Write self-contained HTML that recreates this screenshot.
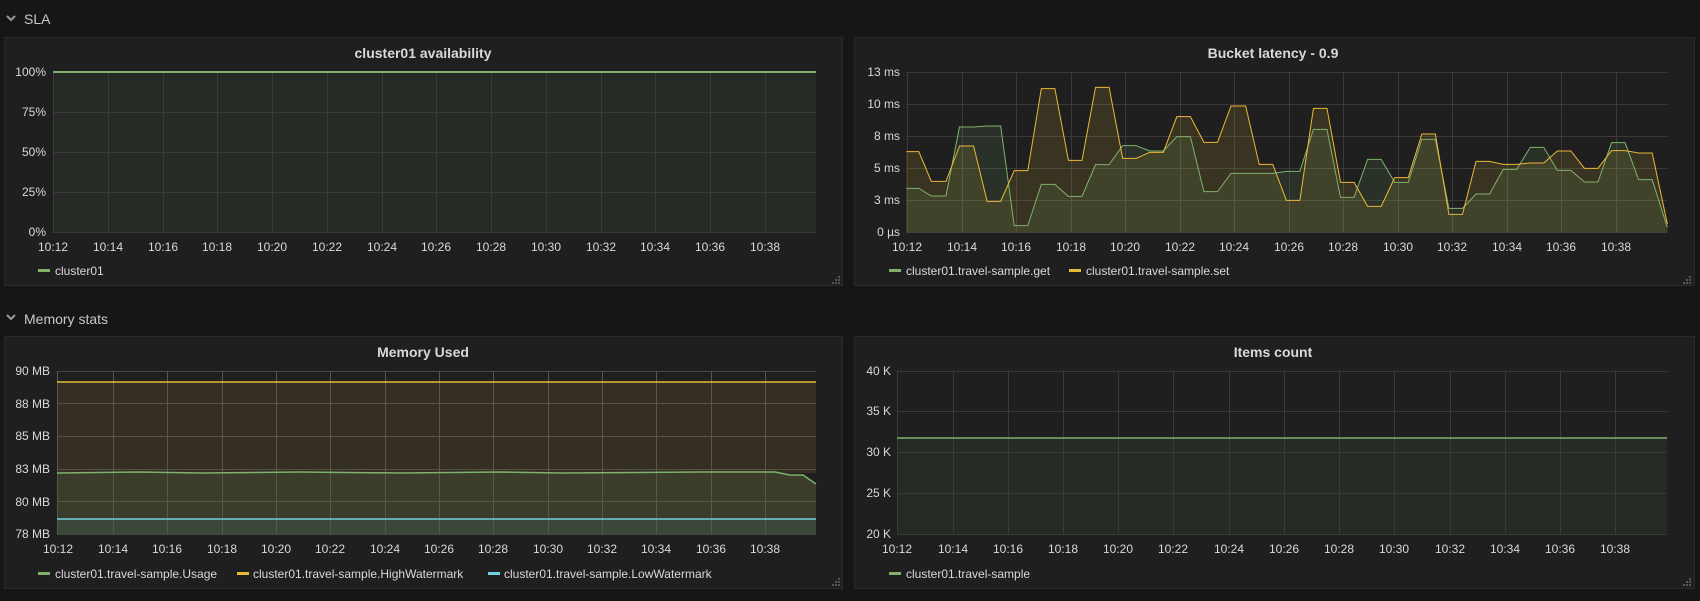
<!DOCTYPE html>
<html><head><meta charset="utf-8"><style>
html,body{margin:0;padding:0;background:#161616;width:1700px;height:601px;overflow:hidden}
svg{display:block}
text{font-family:"Liberation Sans",sans-serif;fill:#d8d9da}
.ax{font-size:12px}
.tt{font-size:14px;font-weight:bold;text-anchor:middle}
.hd{font-size:14px;fill:#c8c8c8}
.lg{font-size:12px}
.g{stroke:#3a3a3a;stroke-width:1}
</style></head><body>
<svg width="1700" height="601" viewBox="0 0 1700 601">
<!-- headers -->
<path d="M7 16 l4 4 l4 -4" stroke="#9a9a9a" stroke-width="2" fill="none"/>
<text class="hd" x="24" y="24">SLA</text>
<path d="M7 315 l4 4 l4 -4" stroke="#9a9a9a" stroke-width="2" fill="none"/>
<text class="hd" x="24" y="324">Memory stats</text>

<!-- panels -->
<rect x="4.5" y="37.5" width="838" height="248" fill="#1f1f20" stroke="#2a2a2b"/>
<rect x="854.5" y="37.5" width="840" height="248" fill="#1f1f20" stroke="#2a2a2b"/>
<rect x="4.5" y="336.5" width="838" height="252" fill="#1f1f20" stroke="#2a2a2b"/>
<rect x="854.5" y="336.5" width="840" height="252" fill="#1f1f20" stroke="#2a2a2b"/>

<text class="tt" x="423" y="58">cluster01 availability</text>
<text class="tt" x="1273" y="58">Bucket latency - 0.9</text>
<text class="tt" x="423" y="357">Memory Used</text>
<text class="tt" x="1273" y="357">Items count</text>

<!-- Panel 1 -->
<rect x="53" y="72" width="763" height="160" fill="#262a24"/>
<g class="g">
<line x1="53" y1="72.5" x2="816" y2="72.5"/><line x1="53" y1="112.5" x2="816" y2="112.5"/><line x1="53" y1="152.5" x2="816" y2="152.5"/><line x1="53" y1="192.5" x2="816" y2="192.5"/><line x1="53" y1="232.5" x2="816" y2="232.5"/>
</g>
<g class="g" id="vx1">
<line x1="53.5" y1="72" x2="53.5" y2="232"/><line x1="108.5" y1="72" x2="108.5" y2="232"/><line x1="163.5" y1="72" x2="163.5" y2="232"/><line x1="217.5" y1="72" x2="217.5" y2="232"/><line x1="272.5" y1="72" x2="272.5" y2="232"/><line x1="327.5" y1="72" x2="327.5" y2="232"/><line x1="382.5" y1="72" x2="382.5" y2="232"/><line x1="436.5" y1="72" x2="436.5" y2="232"/><line x1="491.5" y1="72" x2="491.5" y2="232"/><line x1="546.5" y1="72" x2="546.5" y2="232"/><line x1="601.5" y1="72" x2="601.5" y2="232"/><line x1="655.5" y1="72" x2="655.5" y2="232"/><line x1="710.5" y1="72" x2="710.5" y2="232"/><line x1="765.5" y1="72" x2="765.5" y2="232"/>
</g>
<line x1="53" y1="72" x2="816" y2="72" stroke="#7eb26d" stroke-width="2"/>
<g class="ax" text-anchor="end">
<text x="46" y="76">100%</text><text x="46" y="116">75%</text><text x="46" y="156">50%</text><text x="46" y="196">25%</text><text x="46" y="236">0%</text>
</g>
<g class="ax" text-anchor="middle">
<text x="53" y="251">10:12</text><text x="108" y="251">10:14</text><text x="163" y="251">10:16</text><text x="217" y="251">10:18</text><text x="272" y="251">10:20</text><text x="327" y="251">10:22</text><text x="382" y="251">10:24</text><text x="436" y="251">10:26</text><text x="491" y="251">10:28</text><text x="546" y="251">10:30</text><text x="601" y="251">10:32</text><text x="655" y="251">10:34</text><text x="710" y="251">10:36</text><text x="765" y="251">10:38</text>
</g>
<rect x="38" y="269" width="12" height="3" fill="#7eb26d"/>
<text class="lg" x="55" y="275">cluster01</text>

<!-- Panel 2 -->
<g class="g">
<line x1="906" y1="72.5" x2="1667" y2="72.5"/><line x1="906" y1="104.5" x2="1667" y2="104.5"/><line x1="906" y1="136.5" x2="1667" y2="136.5"/><line x1="906" y1="168.5" x2="1667" y2="168.5"/><line x1="906" y1="200.5" x2="1667" y2="200.5"/><line x1="906" y1="232.5" x2="1667" y2="232.5"/>
</g>
<g class="g">
<line x1="907.5" y1="72" x2="907.5" y2="232"/><line x1="962.5" y1="72" x2="962.5" y2="232"/><line x1="1016.5" y1="72" x2="1016.5" y2="232"/><line x1="1071.5" y1="72" x2="1071.5" y2="232"/><line x1="1125.5" y1="72" x2="1125.5" y2="232"/><line x1="1180.5" y1="72" x2="1180.5" y2="232"/><line x1="1234.5" y1="72" x2="1234.5" y2="232"/><line x1="1289.5" y1="72" x2="1289.5" y2="232"/><line x1="1343.5" y1="72" x2="1343.5" y2="232"/><line x1="1398.5" y1="72" x2="1398.5" y2="232"/><line x1="1452.5" y1="72" x2="1452.5" y2="232"/><line x1="1507.5" y1="72" x2="1507.5" y2="232"/><line x1="1561.5" y1="72" x2="1561.5" y2="232"/><line x1="1616.5" y1="72" x2="1616.5" y2="232"/>
</g>
<g transform="translate(850,0) scale(0.54201,0.33333)">
<path fill="rgba(234,184,57,0.13)" d="M104 697 L104,455 127,455 150,544 177,544 202,438 228,438 253,604 278,604 303,512 328,512 353,266 378,266 403,481 428,481 453,262 478,262 503,475 528,475 553,457 578,457 603,350 628,350 653,427 678,427 703,318 730,318 755,493 780,493 805,601 830,601 855,325 880,325 905,547 930,547 955,619 980,619 1005,533 1030,533 1055,402 1080,402 1105,643 1130,643 1155,484 1180,484 1205,493 1230,493 1255,489 1280,489 1305,453 1330,453 1355,505 1380,505 1405,452 1430,452 1455,459 1480,459 1508,672 L1508 697 Z"/>
<path fill="rgba(126,178,109,0.12)" d="M104 697 L104,565 127,565 150,588 177,588 202,381 228,381 253,378 278,378 303,677 328,677 353,553 378,553 403,589 428,589 453,494 478,494 503,437 528,437 553,453 578,453 603,410 628,410 653,575 678,575 703,520 730,520 755,520 780,520 805,514 830,514 855,388 880,388 905,592 930,592 955,478 980,478 1005,547 1030,547 1055,418 1080,418 1105,625 1130,625 1155,582 1180,582 1205,508 1230,508 1255,442 1280,442 1305,511 1330,511 1355,546 1380,546 1405,428 1430,428 1455,539 1480,539 1508,682 L1508 697 Z"/>
<path fill="none" stroke="#7eb26d" stroke-width="1" vector-effect="non-scaling-stroke" d="M104,565 127,565 150,588 177,588 202,381 228,381 253,378 278,378 303,677 328,677 353,553 378,553 403,589 428,589 453,494 478,494 503,437 528,437 553,453 578,453 603,410 628,410 653,575 678,575 703,520 730,520 755,520 780,520 805,514 830,514 855,388 880,388 905,592 930,592 955,478 980,478 1005,547 1030,547 1055,418 1080,418 1105,625 1130,625 1155,582 1180,582 1205,508 1230,508 1255,442 1280,442 1305,511 1330,511 1355,546 1380,546 1405,428 1430,428 1455,539 1480,539 1508,682"/>
<path fill="none" stroke="#eab839" stroke-width="1" vector-effect="non-scaling-stroke" d="M104,455 127,455 150,544 177,544 202,438 228,438 253,604 278,604 303,512 328,512 353,266 378,266 403,481 428,481 453,262 478,262 503,475 528,475 553,457 578,457 603,350 628,350 653,427 678,427 703,318 730,318 755,493 780,493 805,601 830,601 855,325 880,325 905,547 930,547 955,619 980,619 1005,533 1030,533 1055,402 1080,402 1105,643 1130,643 1155,484 1180,484 1205,493 1230,493 1255,489 1280,489 1305,453 1330,453 1355,505 1380,505 1405,452 1430,452 1455,459 1480,459 1508,672"/>
</g>
<g class="ax" text-anchor="end">
<text x="900" y="76">13 ms</text><text x="900" y="108">10 ms</text><text x="900" y="140">8 ms</text><text x="900" y="172">5 ms</text><text x="900" y="204">3 ms</text><text x="900" y="236">0 µs</text>
</g>
<g class="ax" text-anchor="middle">
<text x="907" y="251">10:12</text><text x="962" y="251">10:14</text><text x="1016" y="251">10:16</text><text x="1071" y="251">10:18</text><text x="1125" y="251">10:20</text><text x="1180" y="251">10:22</text><text x="1234" y="251">10:24</text><text x="1289" y="251">10:26</text><text x="1343" y="251">10:28</text><text x="1398" y="251">10:30</text><text x="1452" y="251">10:32</text><text x="1507" y="251">10:34</text><text x="1561" y="251">10:36</text><text x="1616" y="251">10:38</text>
</g>
<rect x="889" y="269" width="12" height="3" fill="#7eb26d"/>
<text class="lg" x="906" y="275">cluster01.travel-sample.get</text>
<rect x="1069" y="269" width="12" height="3" fill="#eab839"/>
<text class="lg" x="1086" y="275">cluster01.travel-sample.set</text>

<!-- Panel 3 memory -->
<rect x="57" y="382" width="759" height="91" fill="#352e22"/>
<path d="M57 473 L140 472 L200 473 L300 472 L400 473 L500 472 L560 473 L700 472 L775 472 L790 475 L803 475 L816 484 L816 519 L57 519 Z" fill="#3c3c2b"/>
<rect x="57" y="519" width="759" height="15" fill="#3b4738"/>
<g class="g" stroke-opacity="0.9">
<line x1="57" y1="371.5" x2="816" y2="371.5" stroke="#4a4a4a"/><line x1="57" y1="403.5" x2="816" y2="403.5" stroke="#5a5448"/><line x1="57" y1="436.5" x2="816" y2="436.5" stroke="#5a5448"/><line x1="57" y1="469.5" x2="816" y2="469.5" stroke="#5a5448"/><line x1="57" y1="501.5" x2="816" y2="501.5" stroke="#5a5a48"/><line x1="57" y1="534.5" x2="816" y2="534.5" stroke="#4a4a4a"/>
</g>
<g stroke="#57574a" stroke-width="1">
<line x1="57.5" y1="371" x2="57.5" y2="534"/><line x1="113.5" y1="371" x2="113.5" y2="534"/><line x1="167.5" y1="371" x2="167.5" y2="534"/><line x1="222.5" y1="371" x2="222.5" y2="534"/><line x1="276.5" y1="371" x2="276.5" y2="534"/><line x1="330.5" y1="371" x2="330.5" y2="534"/><line x1="385.5" y1="371" x2="385.5" y2="534"/><line x1="439.5" y1="371" x2="439.5" y2="534"/><line x1="493.5" y1="371" x2="493.5" y2="534"/><line x1="548.5" y1="371" x2="548.5" y2="534"/><line x1="602.5" y1="371" x2="602.5" y2="534"/><line x1="656.5" y1="371" x2="656.5" y2="534"/><line x1="711.5" y1="371" x2="711.5" y2="534"/><line x1="765.5" y1="371" x2="765.5" y2="534"/>
</g>
<line x1="57" y1="382" x2="816" y2="382" stroke="#eab839" stroke-width="1.5"/>
<path d="M57 473 L140 472 L200 473 L300 472 L400 473 L500 472 L560 473 L700 472 L775 472 L790 475 L803 475 L816 484" fill="none" stroke="#7eb26d" stroke-width="1.5"/>
<line x1="57" y1="519" x2="816" y2="519" stroke="#6ed0e0" stroke-width="1.5"/>
<g class="ax" text-anchor="end">
<text x="50" y="375">90 MB</text><text x="50" y="408">88 MB</text><text x="50" y="440">85 MB</text><text x="50" y="473">83 MB</text><text x="50" y="506">80 MB</text><text x="50" y="538">78 MB</text>
</g>
<g class="ax" text-anchor="middle">
<text x="58" y="553">10:12</text><text x="113" y="553">10:14</text><text x="167" y="553">10:16</text><text x="222" y="553">10:18</text><text x="276" y="553">10:20</text><text x="330" y="553">10:22</text><text x="385" y="553">10:24</text><text x="439" y="553">10:26</text><text x="493" y="553">10:28</text><text x="548" y="553">10:30</text><text x="602" y="553">10:32</text><text x="656" y="553">10:34</text><text x="711" y="553">10:36</text><text x="765" y="553">10:38</text>
</g>
<rect x="38" y="572" width="12" height="3" fill="#7eb26d"/>
<text class="lg" x="55" y="578">cluster01.travel-sample.Usage</text>
<rect x="237" y="572" width="12" height="3" fill="#eab839"/>
<text class="lg" x="253" y="578">cluster01.travel-sample.HighWatermark</text>
<rect x="488" y="572" width="12" height="3" fill="#6ed0e0"/>
<text class="lg" x="504" y="578">cluster01.travel-sample.LowWatermark</text>

<!-- Panel 4 items -->
<rect x="897" y="438" width="770" height="96" fill="#262a24"/>
<g class="g">
<line x1="897" y1="371.5" x2="1667" y2="371.5"/><line x1="897" y1="411.5" x2="1667" y2="411.5"/><line x1="897" y1="452.5" x2="1667" y2="452.5"/><line x1="897" y1="493.5" x2="1667" y2="493.5"/><line x1="897" y1="534.5" x2="1667" y2="534.5"/>
</g>
<g class="g">
<line x1="897.5" y1="371" x2="897.5" y2="534"/><line x1="953.5" y1="371" x2="953.5" y2="534"/><line x1="1008.5" y1="371" x2="1008.5" y2="534"/><line x1="1063.5" y1="371" x2="1063.5" y2="534"/><line x1="1118.5" y1="371" x2="1118.5" y2="534"/><line x1="1173.5" y1="371" x2="1173.5" y2="534"/><line x1="1229.5" y1="371" x2="1229.5" y2="534"/><line x1="1284.5" y1="371" x2="1284.5" y2="534"/><line x1="1339.5" y1="371" x2="1339.5" y2="534"/><line x1="1394.5" y1="371" x2="1394.5" y2="534"/><line x1="1450.5" y1="371" x2="1450.5" y2="534"/><line x1="1505.5" y1="371" x2="1505.5" y2="534"/><line x1="1560.5" y1="371" x2="1560.5" y2="534"/><line x1="1615.5" y1="371" x2="1615.5" y2="534"/>
</g>
<line x1="897" y1="438" x2="1667" y2="438" stroke="#7eb26d" stroke-width="1.5"/>
<g class="ax" text-anchor="end">
<text x="891" y="375">40 K</text><text x="891" y="415">35 K</text><text x="891" y="456">30 K</text><text x="891" y="497">25 K</text><text x="891" y="538">20 K</text>
</g>
<g class="ax" text-anchor="middle">
<text x="897" y="553">10:12</text><text x="953" y="553">10:14</text><text x="1008" y="553">10:16</text><text x="1063" y="553">10:18</text><text x="1118" y="553">10:20</text><text x="1173" y="553">10:22</text><text x="1229" y="553">10:24</text><text x="1284" y="553">10:26</text><text x="1339" y="553">10:28</text><text x="1394" y="553">10:30</text><text x="1450" y="553">10:32</text><text x="1505" y="553">10:34</text><text x="1560" y="553">10:36</text><text x="1615" y="553">10:38</text>
</g>
<rect x="889" y="572" width="12" height="3" fill="#7eb26d"/>
<text class="lg" x="906" y="578">cluster01.travel-sample</text>

<!-- resize handles -->
<g fill="#555">
<path d="M838 276h2v2h-2zM835 279h2v2h-2zM838 279h2v2h-2zM832 282h2v2h-2zM835 282h2v2h-2zM838 282h2v2h-2z"/>
<path d="M1689 276h2v2h-2zM1686 279h2v2h-2zM1689 279h2v2h-2zM1683 282h2v2h-2zM1686 282h2v2h-2zM1689 282h2v2h-2z"/>
<path d="M838 578h2v2h-2zM835 581h2v2h-2zM838 581h2v2h-2zM832 584h2v2h-2zM835 584h2v2h-2zM838 584h2v2h-2z"/>
<path d="M1689 578h2v2h-2zM1686 581h2v2h-2zM1689 581h2v2h-2zM1683 584h2v2h-2zM1686 584h2v2h-2zM1689 584h2v2h-2z"/>
</g>
</svg>
</body></html>
